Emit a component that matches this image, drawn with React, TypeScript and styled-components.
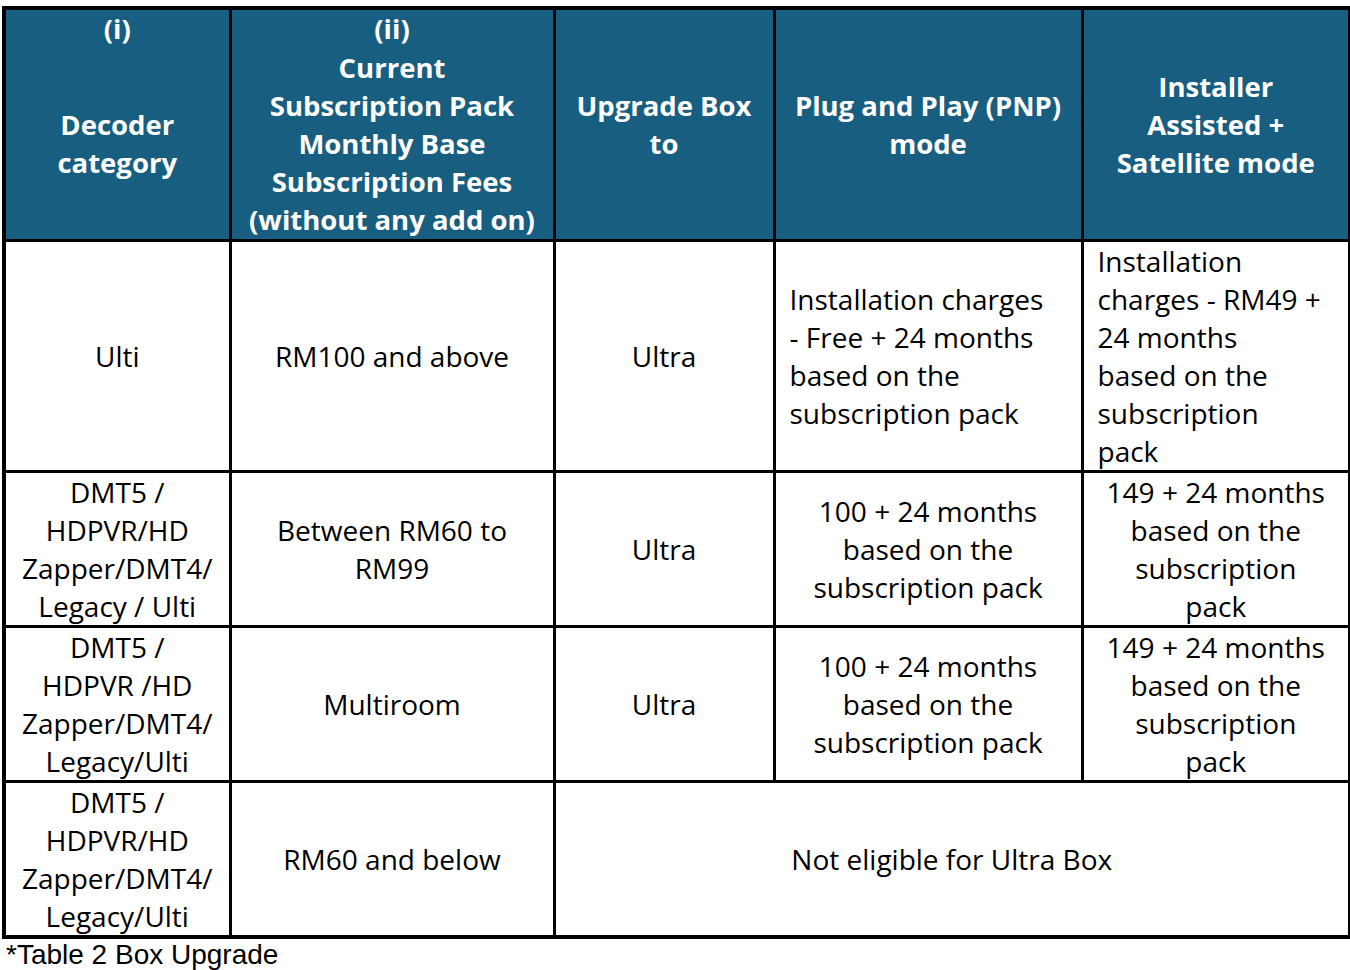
import React from "react";
import styled, { createGlobalStyle } from "styled-components";

const GlobalStyle = createGlobalStyle`
  html, body {
    margin: 0;
    padding: 0;
    background: #ffffff;
  }
`;

const Page = styled.div`
  padding: 6px 1px 0 2px;
`;

const Table = styled.table`
  width: 1346px;
  border-collapse: collapse;
  table-layout: fixed;
  border: 4px solid #000;
`;

const HeadCell = styled.th<{ $h?: number }>`
  background: #185e80;
  color: #ffffff;
  font-family: "Open Sans", "Noto Sans", sans-serif;
  font-weight: 700;
  font-size: 27.5px;
  line-height: 38px;
  text-align: center;
  vertical-align: middle;
  padding: 0 2px;
  border-left: 3px solid #000;
  border-right: 3px solid #000;
  white-space: nowrap;
  height: ${(p) => (p.$h ? `${p.$h}px` : "auto")};
`;

const TopHeadCell = styled(HeadCell)`
  vertical-align: top;
  padding-top: 0;
`;

const Cell = styled.td<{ $left?: boolean }>`
  border: 3px solid #000;
  font-family: "Open Sans", "Noto Sans", sans-serif;
  font-size: 28px;
  line-height: 38px;
  color: #000;
  text-align: ${(p) => (p.$left ? "left" : "center")};
  vertical-align: middle;
  padding: ${(p) => (p.$left ? "0 2px 0 14px" : "0 2px")};
  white-space: nowrap;
  overflow: hidden;
`;

const BodyRow = styled.tr<{ $h: number }>`
  height: ${(p) => p.$h}px;
`;

const Caption = styled.div`
  font-family: "Liberation Sans", Arial, sans-serif;
  font-size: 28px;
  line-height: 32px;
  color: #000;
  padding-left: 4px;
`;

type Row = {
  h: number;
  cells: { text: string[]; left?: boolean; span?: number }[];
};

const rows: Row[] = [
  {
    h: 227,
    cells: [
      { text: ["Ulti"] },
      { text: ["RM100 and above"] },
      { text: ["Ultra"] },
      {
        text: ["Installation charges", "- Free + 24 months", "based on the", "subscription pack"],
        left: true,
      },
      {
        text: ["Installation", "charges - RM49 +", "24 months", "based on the", "subscription", "pack"],
        left: true,
      },
    ],
  },
  {
    h: 155,
    cells: [
      { text: ["DMT5 /", "HDPVR/HD", "Zapper/DMT4/", "Legacy / Ulti"] },
      { text: ["Between RM60 to", "RM99"] },
      { text: ["Ultra"] },
      { text: ["100 + 24 months", "based on the", "subscription pack"] },
      { text: ["149 + 24 months", "based on the", "subscription", "pack"] },
    ],
  },
  {
    h: 155,
    cells: [
      { text: ["DMT5 /", "HDPVR /HD", "Zapper/DMT4/", "Legacy/Ulti"] },
      { text: ["Multiroom"] },
      { text: ["Ultra"] },
      { text: ["100 + 24 months", "based on the", "subscription pack"] },
      { text: ["149 + 24 months", "based on the", "subscription", "pack"] },
    ],
  },
  {
    h: 154,
    cells: [
      { text: ["DMT5 /", "HDPVR/HD", "Zapper/DMT4/", "Legacy/Ulti"] },
      { text: ["RM60 and below"] },
      { text: ["Not eligible for Ultra Box"], span: 3 },
    ],
  },
];

const Lines = ({ text }: { text: string[] }) => (
  <>
    {text.map((t, i) => (
      <React.Fragment key={i}>
        {i > 0 && <br />}
        {t}
      </React.Fragment>
    ))}
  </>
);

export default function App() {
  return (
    <Page>
      <GlobalStyle />
      <Table>
        <colgroup>
          <col style={{ width: 226 }} />
          <col style={{ width: 324 }} />
          <col style={{ width: 220 }} />
          <col style={{ width: 308 }} />
          <col style={{ width: 268 }} />
        </colgroup>
        <thead>
          <tr>
            <TopHeadCell $h={39}>(i)</TopHeadCell>
            <TopHeadCell $h={39}>(ii)</TopHeadCell>
            <HeadCell rowSpan={2}>
              <Lines text={["Upgrade Box", "to"]} />
            </HeadCell>
            <HeadCell rowSpan={2}>
              <Lines text={["Plug and Play (PNP)", "mode"]} />
            </HeadCell>
            <HeadCell rowSpan={2}>
              <Lines text={["Installer", "Assisted +", "Satellite mode"]} />
            </HeadCell>
          </tr>
          <tr>
            <HeadCell $h={189}>
              <Lines text={["Decoder", "category"]} />
            </HeadCell>
            <HeadCell $h={189}>
              <Lines
                text={[
                  "Current",
                  "Subscription Pack",
                  "Monthly Base",
                  "Subscription Fees",
                  "(without any add on)",
                ]}
              />
            </HeadCell>
          </tr>
        </thead>
        <tbody>
          {rows.map((r, i) => (
            <BodyRow key={i} $h={r.h}>
              {r.cells.map((c, j) => (
                <Cell key={j} $left={c.left} colSpan={c.span}>
                  <Lines text={c.text} />
                </Cell>
              ))}
            </BodyRow>
          ))}
        </tbody>
      </Table>
      <Caption>*Table 2 Box Upgrade</Caption>
    </Page>
  );
}
